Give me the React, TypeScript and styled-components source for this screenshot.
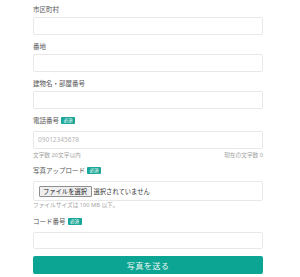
import React from "react";
import styled, { createGlobalStyle } from "styled-components";

const Global = createGlobalStyle`
  html, body { margin: 0; padding: 0; background: #fff; }
  body { font-family: "Noto Sans", "Noto Sans CJK JP", sans-serif; -webkit-font-smoothing: antialiased; }
  * { box-sizing: border-box; }
`;

const Form = styled.form`
  width: 230px;
  margin-left: 33px;
  padding-top: 4px;
  display: flex;
  flex-direction: column;
`;

const Field = styled.div`
  display: flex;
  flex-direction: column;
  margin-bottom: 6.5px;
`;

const Label = styled.div<{ $required?: boolean }>`
  display: flex;
  align-items: center;
  height: 11px;
  margin-bottom: ${(p) => (p.$required ? "5px" : "2px")};
  font-size: 6.5px;
  line-height: 11px;
  color: #555;
  font-family: "Noto Sans CJK JP", sans-serif;
`;

const Badge = styled.span`
  display: inline-flex;
  align-items: center;
  justify-content: center;
  margin-left: 2px;
  width: 14px;
  height: 7px;
  border-radius: 1px;
  background: #17a697;
  color: #fff;
  font-size: 4.5px;
  line-height: 7px;
`;

const Input = styled.input`
  height: 17.5px;
  width: 100%;
  border: 1px solid #e8e8e8;
  border-radius: 2px;
  padding: 0 4px;
  font-size: 6.5px;
  font-family: "Noto Sans", sans-serif;
  color: #333;
  outline: none;
  background: #fff;
  &::placeholder { color: #b5b5b5; }
`;

const Help = styled.div<{ $tight?: boolean }>`
  display: flex;
  justify-content: space-between;
  margin-top: ${(p) => (p.$tight ? "0" : "2px")};
  height: 8px;
  font-size: 5.7px;
  line-height: 8px;
  color: #a3a3a3;
  font-family: "Noto Sans", "Noto Sans CJK JP", sans-serif;
`;

const FileBox = styled.div`
  height: 20px;
  border: 1px solid #e8e8e8;
  border-radius: 2px;
  display: flex;
  align-items: center;
  padding-left: 4.5px;
  gap: 2px;
  font-family: "Noto Sans CJK JP", sans-serif;
`;

const FileButton = styled.span`
  display: inline-flex;
  align-items: center;
  justify-content: center;
  width: 53px;
  height: 11px;
  border: 1px solid #8f8f8f;
  border-radius: 1px;
  background: #efefef;
  color: #222;
  font-size: 6.3px;
`;

const FileText = styled.span`
  font-size: 6.3px;
  color: #333;
`;

const Submit = styled.button`
  margin-top: 0.5px;
  height: 18px;
  width: 100%;
  border: none;
  border-radius: 2px;
  background: #0ca492;
  color: #eaf8f5;
  font-size: 8.2px;
  letter-spacing: 0.3px;
  font-family: "Noto Sans CJK JP", sans-serif;
  cursor: pointer;
`;

export default function App() {
  return (
    <>
      <Global />
      <Form onSubmit={(e) => e.preventDefault()}>
        <Field>
          <Label>市区町村</Label>
          <Input />
        </Field>
        <Field>
          <Label>番地</Label>
          <Input />
        </Field>
        <Field>
          <Label>建物名・部屋番号</Label>
          <Input />
        </Field>
        <Field>
          <Label $required>
            電話番号<Badge>必須</Badge>
          </Label>
          <Input placeholder="09012345678" />
          <Help>
            <span>文字数 20文字以内</span>
            <span>現在の文字数 0</span>
          </Help>
        </Field>
        <Field>
          <Label $required>
            写真アップロード<Badge>必須</Badge>
          </Label>
          <FileBox>
            <FileButton>ファイルを選択</FileButton>
            <FileText>選択されていません</FileText>
          </FileBox>
          <Help $tight>
            <span>ファイルサイズは 100 MB 以下。</span>
          </Help>
        </Field>
        <Field>
          <Label $required>
            コード番号<Badge>必須</Badge>
          </Label>
          <Input />
        </Field>
        <Submit type="submit">写真を送る</Submit>
      </Form>
    </>
  );
}
